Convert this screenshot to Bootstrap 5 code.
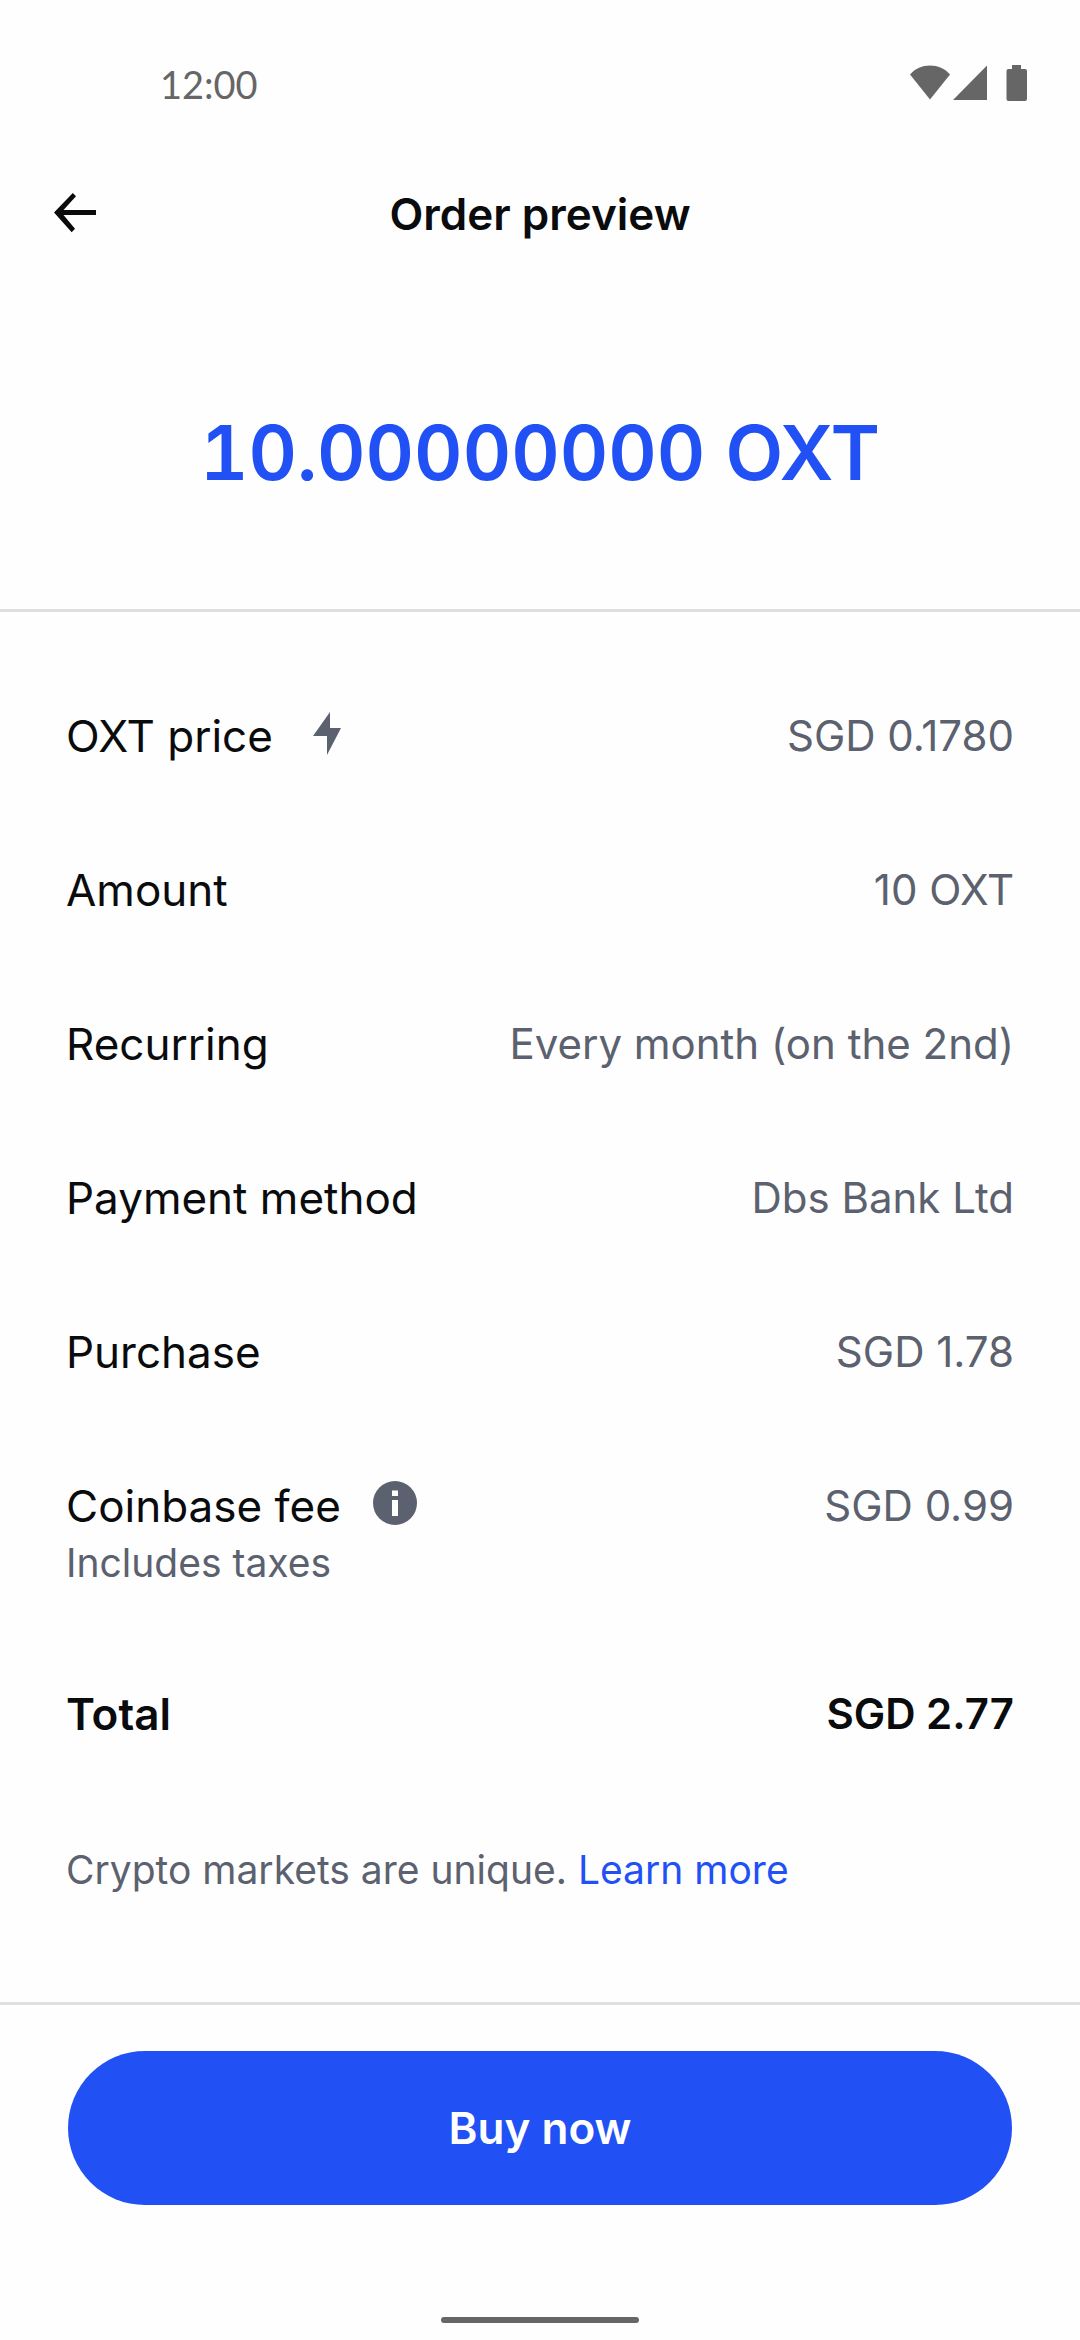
<!DOCTYPE html>
<html lang="en">
<head>
<meta charset="utf-8">
<meta name="viewport" content="width=device-width, initial-scale=1">
<title>Order preview</title>
<link href="https://cdn.jsdelivr.net/npm/bootstrap@5.3.0/dist/css/bootstrap.min.css" rel="stylesheet">
<style>
  :root { --ink: #0a0b0d; --muted: #5b616e; --brand: #2151f5; --system: #666; }
  body { font-family: Inter, "Liberation Sans", sans-serif; font-size: 44px; line-height: 60px; color: var(--ink); background: #fefefe; }
  svg { display: block; fill: currentColor; }
  .status-bar { padding: 60px 46px 0 160px; height: 122px; color: var(--system); }
  .clock { font-family: Lato, sans-serif; font-size: 38px; line-height: 48px; }
  .top-bar { display: grid; grid-template-columns: 1fr auto 1fr; padding: 0 54px; height: 184px; }
  .top-bar h1 { font-size: 44px; line-height: 60px; }
  .hero { padding: 97px 24px 106px; border-bottom: 3px solid #dedfe1; }
  .hero-amount { font-size: 75px; line-height: 100px; color: var(--brand); font-variant-numeric: tabular-nums; }
  .details { padding: 47px 66px 0; }
  .detail-row { padding: 47px 0; }
  .detail-row dd { font-size: 42px; color: var(--muted); }
  .detail-row.total-row dd { color: var(--ink); }
  .row-icon { color: var(--muted); }
  .note { font-size: 39px; line-height: 54px; color: var(--muted); }
  .disclaimer { padding: 52px 66px 80px; }
  .disclaimer a { color: var(--brand); }
  .actions { border-top: 3px solid #dedfe1; padding: 46px 68px 112px; }
  .btn-buy { --bs-btn-bg: var(--brand); --bs-btn-color: #fff; --bs-btn-hover-bg: #1a45d6; --bs-btn-hover-color: #fff; --bs-btn-font-size: 44px; --bs-btn-line-height: 60px; --bs-btn-padding-y: 47px; --bs-btn-border-width: 0; --bs-btn-font-weight: 600; }
  .home-bar { width: 198px; height: 6px; margin-bottom: 17px; background: var(--system); }
</style>
</head>
<body>
<div class="d-flex flex-column min-vh-100">
  <div class="status-bar d-flex justify-content-between align-items-start">
    <span class="clock">12:00</span>
    <svg width="124" height="48" viewBox="0 0 124 48" aria-hidden="true">
      <path d="M0 14.500C10 2.500 30 2.500 40 14.500L20 39.500z"/>
      <path d="M77 5.500v34.500H43z"/>
      <path d="M102 5h9v4h4q2 0 2 2v28q0 2-2 2H98.500q-2 0-2-2V11q0-2 2-2h3.500z"/>
    </svg>
  </div>

  <header class="top-bar align-items-center">
    <button type="button" class="btn p-0 border-0 text-reset text-start" aria-label="Back">
      <svg width="44" height="44" viewBox="0 0 44 44" aria-hidden="true">
        <path d="M0 20.500L18.800 1l3.200 3.200L9.500 18H42v5H9.500L21 36.800l-3.300 3.400z"/>
      </svg>
    </button>
    <h1 class="fw-semibold m-0">Order preview</h1>
  </header>

  <section class="hero text-center">
    <p class="hero-amount fw-semibold m-0">10.00000000 OXT</p>
  </section>

  <main>
    <dl class="details m-0">
      <div class="detail-row d-flex justify-content-between">
        <dt class="fw-normal d-flex align-items-center">OXT price
          <svg class="row-icon ms-4" width="60" height="50" viewBox="0 0 60 50" aria-hidden="true"><path d="M33 1v16h11L30 44V25H16z"/></svg>
        </dt>
        <dd class="m-0">SGD 0.1780</dd>
      </div>
      <div class="detail-row d-flex justify-content-between">
        <dt class="fw-normal">Amount</dt><dd class="m-0">10 OXT</dd>
      </div>
      <div class="detail-row d-flex justify-content-between">
        <dt class="fw-normal">Recurring</dt><dd class="m-0">Every month (on the 2nd)</dd>
      </div>
      <div class="detail-row d-flex justify-content-between">
        <dt class="fw-normal">Payment method</dt><dd class="m-0">Dbs Bank Ltd</dd>
      </div>
      <div class="detail-row d-flex justify-content-between">
        <dt class="fw-normal">Purchase</dt><dd class="m-0">SGD 1.78</dd>
      </div>
      <div class="detail-row d-flex justify-content-between">
        <dt class="fw-normal">
          <div class="d-flex align-items-center">Coinbase fee
            <button type="button" class="row-icon btn p-0 border-0 ms-4" aria-label="About the Coinbase fee">
              <svg width="60" height="50" viewBox="0 0 60 50" aria-hidden="true"><circle cx="30" cy="22" r="22" fill="#5b616e"/><path fill="#fff" d="M27 9.500h6v5.500h-6zM27 19h6v16h-6z"/></svg>
            </button>
          </div>
          <div class="note">Includes taxes</div>
        </dt>
        <dd class="m-0">SGD 0.99</dd>
      </div>
      <div class="detail-row total-row d-flex justify-content-between fw-semibold">
        <dt class="fw-semibold">Total</dt><dd class="m-0">SGD 2.77</dd>
      </div>
    </dl>
    <p class="disclaimer note m-0">Crypto markets are unique. <a href="#" class="text-decoration-none">Learn more</a></p>
  </main>

  <footer class="mt-auto">
    <div class="actions">
      <button type="button" class="btn btn-buy rounded-pill w-100">Buy now</button>
    </div>
    <div class="home-bar rounded-pill mx-auto"></div>
  </footer>
</div>
<script src="https://cdn.jsdelivr.net/npm/bootstrap@5.3.0/dist/js/bootstrap.bundle.min.js"></script>
</body>
</html>
